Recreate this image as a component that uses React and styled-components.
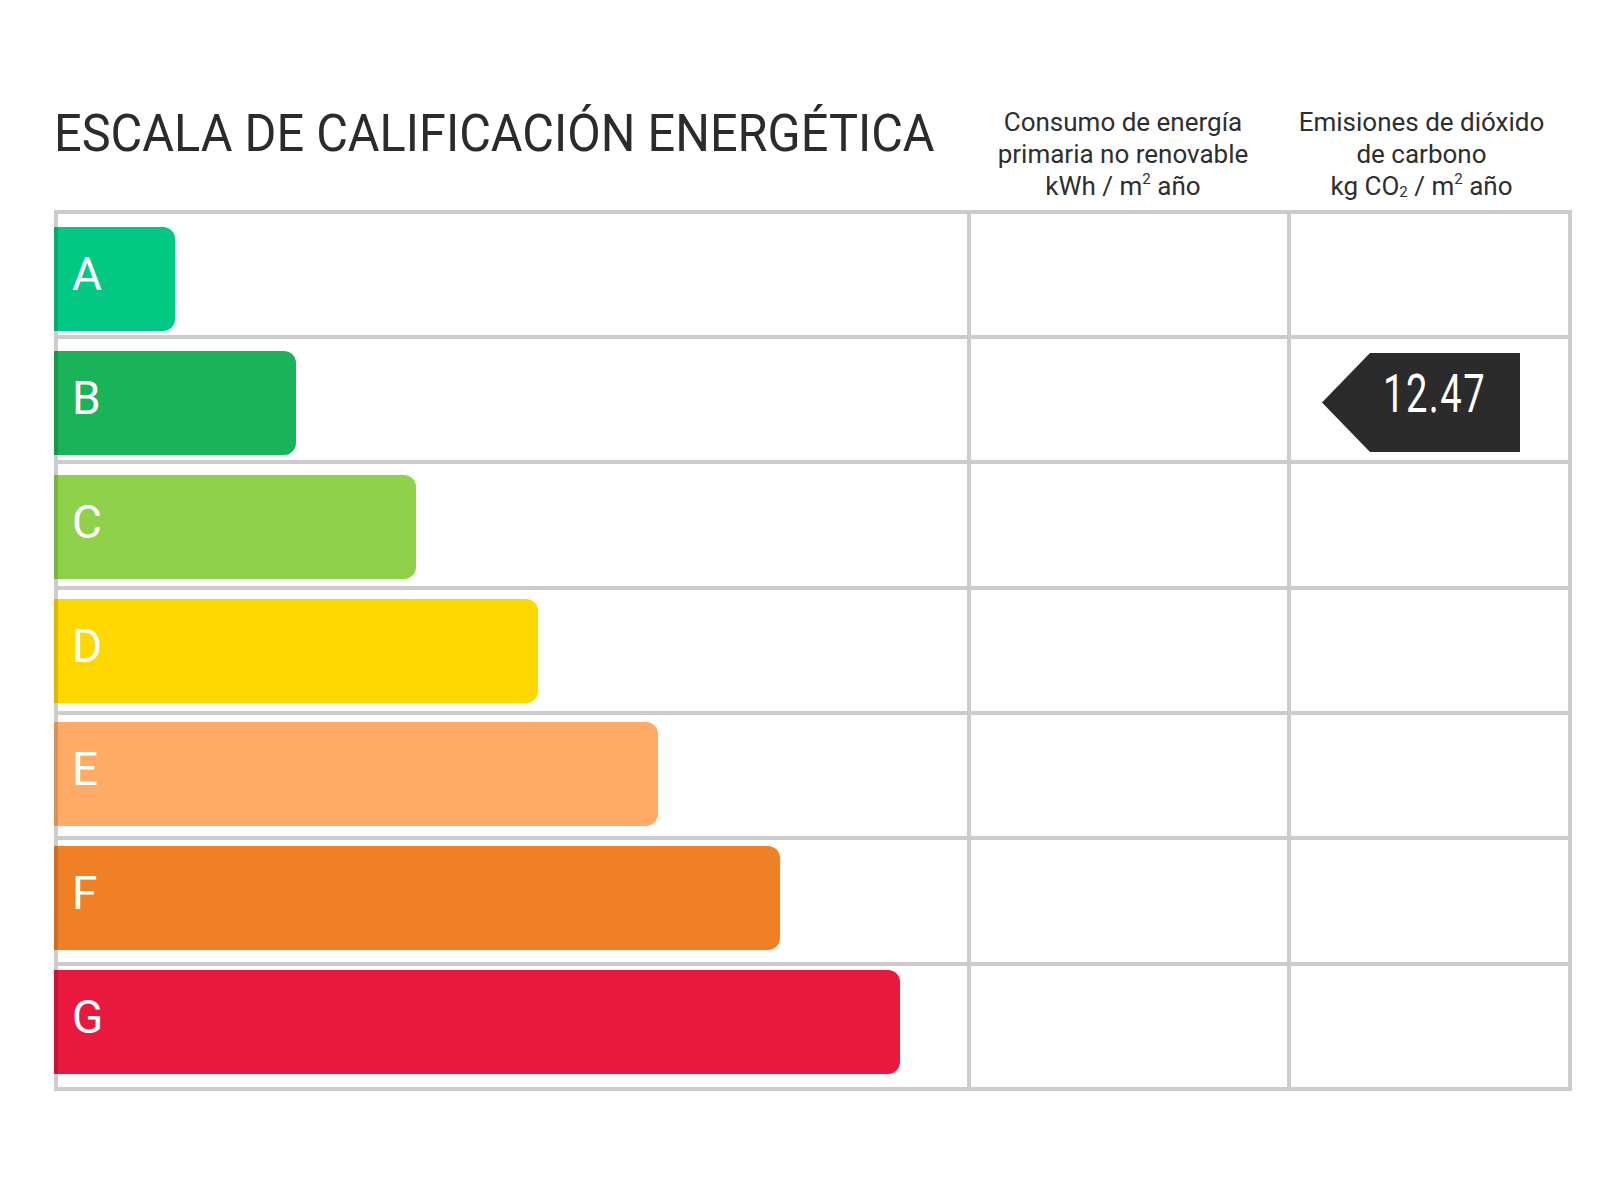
import React from "react";
import styled, { createGlobalStyle } from "styled-components";

const GlobalStyle = createGlobalStyle`
  html, body {
    margin: 0;
    padding: 0;
    background: #ffffff;
  }
  body {
    font-family: Roboto, "Liberation Sans", sans-serif;
    color: #2b2b2b;
  }
`;

const GRID = "#cccccc";

const Page = styled.div`
  padding: 106px 0 0 54px;
  width: 1518px;
`;

const Header = styled.div`
  display: grid;
  grid-template-columns: 917px 320px 281px;
  align-items: start;
  margin-bottom: 8px;
`;

const Title = styled.h1`
  margin: 2px 0 0;
  font-size: 52px;
  line-height: 1;
  font-weight: 400;
  color: #2b2b2b;
  white-space: nowrap;
  transform: scaleX(0.936);
  transform-origin: left center;
`;

const ColumnHead = styled.div`
  font-size: 26px;
  line-height: 32px;
  text-align: center;
  color: #2e2e2e;
  padding-right: ${({ $shift }) => $shift}px;
  white-space: nowrap;

  sup,
  sub {
    font-size: 0.58em;
    line-height: 0;
  }
  sup {
    vertical-align: 0.75em;
  }
  sub {
    vertical-align: -0.15em;
  }
`;

const Table = styled.div`
  border: 4px solid ${GRID};
  box-sizing: border-box;
  width: 1518px;
`;

const Row = styled.div`
  display: grid;
  grid-template-columns: 913px 320px 277px;
  height: ${({ $height }) => $height}px;
  border-bottom: 4px solid ${GRID};

  &:last-child {
    border-bottom: none;
  }
`;

const Cell = styled.div`
  border-right: 4px solid ${GRID};

  &:last-child {
    border-right: none;
  }
`;

const Bar = styled.div`
  margin-left: -4px;
  margin-top: ${({ $offset }) => $offset}px;
  height: 104px;
  background: ${({ $color }) => $color};
  border-radius: 0 12px 12px 0;
  box-shadow: inset 4px 0 0 rgba(0, 0, 0, 0.14);
  display: flex;
  align-items: center;
  padding: 0 0 11px 18px;
  box-sizing: border-box;
  color: #ffffff;
  font-size: 46px;
  line-height: 1;
`;

const Badge = styled.div`
  margin: 14px 0 0 31px;
  width: 198px;
  height: 99px;
  background: #2b2b2b;
  clip-path: polygon(48px 0, 100% 0, 100% 100%, 48px 100%, 0 50%);
  display: flex;
  align-items: center;
  padding: 0 0 16px 61px;
  box-sizing: border-box;
  color: #ffffff;
`;

const Value = styled.span`
  display: inline-block;
  font-size: 53px;
  line-height: 1;
  letter-spacing: 2px;
  transform: scaleX(0.72);
  transform-origin: left center;
`;

const ratings = [
  { letter: "A", color: "#02c884", width: 121, offset: 13, height: 121 },
  { letter: "B", color: "#1bb35a", width: 242, offset: 12, height: 121 },
  { letter: "C", color: "#8fd14a", width: 362, offset: 11, height: 122 },
  { letter: "D", color: "#ffd800", width: 484, offset: 9, height: 121 },
  { letter: "E", color: "#ffaa66", width: 604, offset: 7, height: 121 },
  { letter: "F", color: "#ef8026", width: 726, offset: 6, height: 122 },
  { letter: "G", color: "#e9183d", width: 846, offset: 4, height: 121 },
];

const emissions = { B: "12.47" };

export default function App() {
  return (
    <>
      <GlobalStyle />
      <Page>
        <Header>
          <Title>ESCALA DE CALIFICACIÓN ENERGÉTICA</Title>
          <ColumnHead $shift={16}>
            Consumo de energía
            <br />
            primaria no renovable
            <br />
            kWh / m<sup>2</sup> año
          </ColumnHead>
          <ColumnHead $shift={20}>
            Emisiones de dióxido
            <br />
            de carbono
            <br />
            kg CO<sub>2</sub> / m<sup>2</sup> año
          </ColumnHead>
        </Header>
        <Table>
          {ratings.map((r) => (
            <Row key={r.letter} $height={r.height}>
              <Cell>
                <Bar $color={r.color} $offset={r.offset} style={{ width: r.width }}>
                  {r.letter}
                </Bar>
              </Cell>
              <Cell />
              <Cell>
                {emissions[r.letter] && (
                  <Badge>
                    <Value>{emissions[r.letter]}</Value>
                  </Badge>
                )}
              </Cell>
            </Row>
          ))}
        </Table>
      </Page>
    </>
  );
}
